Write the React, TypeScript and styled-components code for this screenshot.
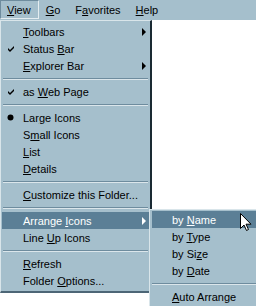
import React from "react";
import styled, { createGlobalStyle } from "styled-components";

const Global = createGlobalStyle`
  html, body { margin: 0; padding: 0; background: #ffffff; }
  body {
    font-family: "Liberation Sans", Arial, sans-serif;
    font-size: 11px;
    color: #000;
    width: 256px;
    height: 306px;
    overflow: hidden;
  }
`;

const Page = styled.div`
  position: relative;
  width: 256px;
  height: 306px;
  overflow: hidden;
  background: #ffffff;
`;

const MenuBar = styled.div`
  display: flex;
  align-items: stretch;
  height: 19px;
  background: #a5bfcc;
  padding-bottom: 1px;
`;

const BarItem = styled.div<{ $pressed?: boolean }>`
  display: flex;
  align-items: center;
  padding: 0 7px 0 6px;
  border: 1px solid transparent;
  ${(p) =>
    p.$pressed &&
    `
    border-color: #6e8c9e #e4edf1 #e4edf1 #6e8c9e;
  `}
`;

const Body = styled.div`
  display: flex;
  align-items: flex-start;
`;

const Dropdown = styled.div`
  width: 149px;
  background: #a5bfcc;
  border-top: 1px solid #d9e5ea;
  border-left: 1px solid #d9e5ea;
  border-right: 2px solid #1a2a33;
  border-bottom: 2px solid #4d6676;
  padding: 2px 0;
`;

const SubMenu = styled.div`
  position: absolute;
  left: 149px;
  top: 209px;
  width: 120px;
  background: #a5bfcc;
  border-top: 1px solid #d9e5ea;
  border-left: 1px solid #d9e5ea;
  padding: 1px 0 2px;
`;

const Item = styled.div<{ $active?: boolean; $sub?: boolean }>`
  position: relative;
  display: flex;
  align-items: center;
  height: 17px;
  margin: 0 ${(p) => (p.$sub ? "0" : "1px")} 0 ${(p) => (p.$sub ? "2px" : "1px")};
  padding-left: ${(p) => (p.$sub ? "20px" : "21px")};
  background: ${(p) => (p.$active ? "#5b7f96" : "transparent")};
  color: ${(p) => (p.$active ? "#ffffff" : "#000000")};
  white-space: pre;
`;

const Label = styled.span`
  white-space: pre;
`;

const Mark = styled.span`
  position: absolute;
  left: 5px;
  top: 0;
  height: 17px;
  display: flex;
  align-items: center;
`;

const Arrow = styled.span<{ $active?: boolean }>`
  position: absolute;
  right: 3px;
  top: 5px;
  width: 0;
  height: 0;
  border-top: 4px solid transparent;
  border-bottom: 4px solid transparent;
  border-left: 4px solid ${(p) => (p.$active ? "#ffffff" : "#000000")};
`;

const Separator = styled.div`
  height: 9px;
  display: flex;
  flex-direction: column;
  justify-content: center;
  margin: 0 2px;
  &::before {
    content: "";
    height: 1px;
    background: #6e8c9e;
  }
  &::after {
    content: "";
    height: 1px;
    background: #dbe6eb;
  }
`;

const Key = styled.u`
  text-decoration: underline;
  text-underline-offset: 1px;
`;

const Cursor = styled.svg`
  position: absolute;
  left: 240px;
  top: 213px;
`;

const Check = () => (
  <svg width="8" height="8" viewBox="0 0 8 8">
    <path d="M1 3 L3 5 L7 1 L7 3 L3 7 L1 5 Z" fill="#000" />
  </svg>
);

const Dot = () => (
  <svg width="7" height="7" viewBox="0 0 7 7">
    <circle cx="3.5" cy="3.5" r="3" fill="#000" />
  </svg>
);

export default function App() {
  return (
    <Page>
      <Global />
      <MenuBar>
        <BarItem $pressed>
          <Label>
            <Key>V</Key>iew
          </Label>
        </BarItem>
        <BarItem>
          <Label>
            <Key>G</Key>o
          </Label>
        </BarItem>
        <BarItem>
          <Label>
            F<Key>a</Key>vorites
          </Label>
        </BarItem>
        <BarItem>
          <Label>
            <Key>H</Key>elp
          </Label>
        </BarItem>
      </MenuBar>
      <Body>
        <Dropdown>
          <Item>
            <Label>
              <Key>T</Key>oolbars
            </Label>
            <Arrow />
          </Item>
          <Item>
            <Mark>
              <Check />
            </Mark>
            <Label>
              Status <Key>B</Key>ar
            </Label>
          </Item>
          <Item>
            <Label>
              <Key>E</Key>xplorer Bar
            </Label>
            <Arrow />
          </Item>
          <Separator />
          <Item>
            <Mark>
              <Check />
            </Mark>
            <Label>
              as <Key>W</Key>eb Page
            </Label>
          </Item>
          <Separator />
          <Item>
            <Mark>
              <Dot />
            </Mark>
            <Label>
              Lar<Key>g</Key>e Icons
            </Label>
          </Item>
          <Item>
            <Label>
              S<Key>m</Key>all Icons
            </Label>
          </Item>
          <Item>
            <Label>
              <Key>L</Key>ist
            </Label>
          </Item>
          <Item>
            <Label>
              <Key>D</Key>etails
            </Label>
          </Item>
          <Separator />
          <Item>
            <Label>
              <Key>C</Key>ustomize this Folder...
            </Label>
          </Item>
          <Separator />
          <Item $active>
            <Label>
              Arrange <Key>I</Key>cons
            </Label>
            <Arrow $active />
          </Item>
          <Item>
            <Label>
              Line <Key>U</Key>p Icons
            </Label>
          </Item>
          <Separator />
          <Item>
            <Label>
              <Key>R</Key>efresh
            </Label>
          </Item>
          <Item>
            <Label>
              Folder <Key>O</Key>ptions...
            </Label>
          </Item>
        </Dropdown>
      </Body>
      <SubMenu>
        <Item $sub $active>
          <Label>
            by <Key>N</Key>ame
          </Label>
        </Item>
        <Item $sub>
          <Label>
            by <Key>T</Key>ype
          </Label>
        </Item>
        <Item $sub>
          <Label>
            by Si<Key>z</Key>e
          </Label>
        </Item>
        <Item $sub>
          <Label>
            by <Key>D</Key>ate
          </Label>
        </Item>
        <Separator />
        <Item $sub>
          <Label>
            <Key>A</Key>uto Arrange
          </Label>
        </Item>
      </SubMenu>
      <Cursor width="12" height="19" viewBox="0 0 12 19">
        <path
          d="M0.5 0.5 L0.5 15.5 L4 12 L6.5 17.5 L8.5 16.5 L6 11.2 L11 11.2 Z"
          fill="#ffffff"
          stroke="#000000"
          strokeWidth="1"
        />
      </Cursor>
    </Page>
  );
}
